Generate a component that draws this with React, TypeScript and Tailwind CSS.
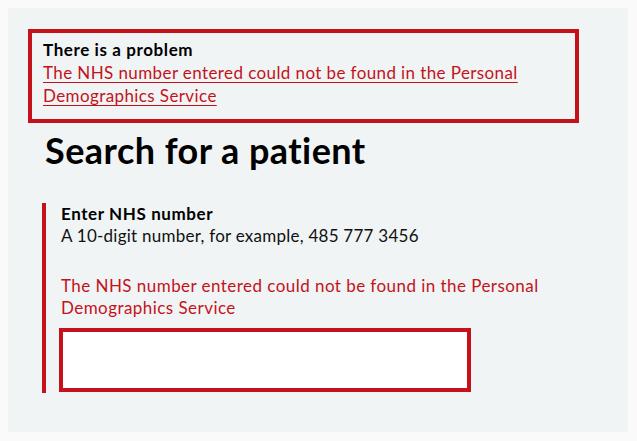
import React from "react";

export default function App() {
  const red = "text-[#c4121a]";
  return (
    <div className="min-h-[441px] bg-[#fafafa] p-2" style={{ fontFamily: "Lato, 'Open Sans', sans-serif" }}>
      <div className="h-[424px] w-[620px] bg-[#f0f4f5] pl-5 pt-[21px]">
        <div className="w-[551px] border-4 border-[#c4121a] pb-[12px] pl-[11px] pt-[5px]">
          <div className="text-[17px] font-bold leading-[23px] tracking-[0.6px] text-black">There is a problem</div>
          <a
            href="#"
            className={`block text-[17px] leading-[23px] tracking-[0.4px] ${red} underline decoration-1 underline-offset-[3px]`}
          >
            The NHS number entered could not be found in the Personal{" "}
            <br />
            Demographics Service
          </a>
        </div>
        <h1 className="ml-[17px] mt-[6px] text-[36px] font-bold leading-[43px] tracking-[0.45px] text-black">
          Search for a patient
        </h1>
        <div className="ml-[14px] mt-[31px] w-[560px] border-l-4 border-[#c4121a] pb-[1px] pl-[13px]">
          <div className="ml-[2px] text-[17px] font-bold leading-[22px] tracking-[0.6px] text-black">Enter NHS number</div>
          <div className="ml-[2px] text-[17px] leading-[22px] tracking-[0.25px] text-[#111]">
            A 10-digit number, for example, 485 777 3456
          </div>
          <div className={`ml-[2px] mt-[28px] text-[17px] leading-[22px] tracking-[0.45px] ${red}`}>
            The NHS number entered could not be found in the Personal
            <br />
            Demographics Service
          </div>
          <input
            type="text"
            aria-label="NHS number"
            className="mt-[9px] block h-[64px] w-[412px] border-4 border-[#c4121a] bg-white outline-none"
          />
        </div>
      </div>
    </div>
  );
}
